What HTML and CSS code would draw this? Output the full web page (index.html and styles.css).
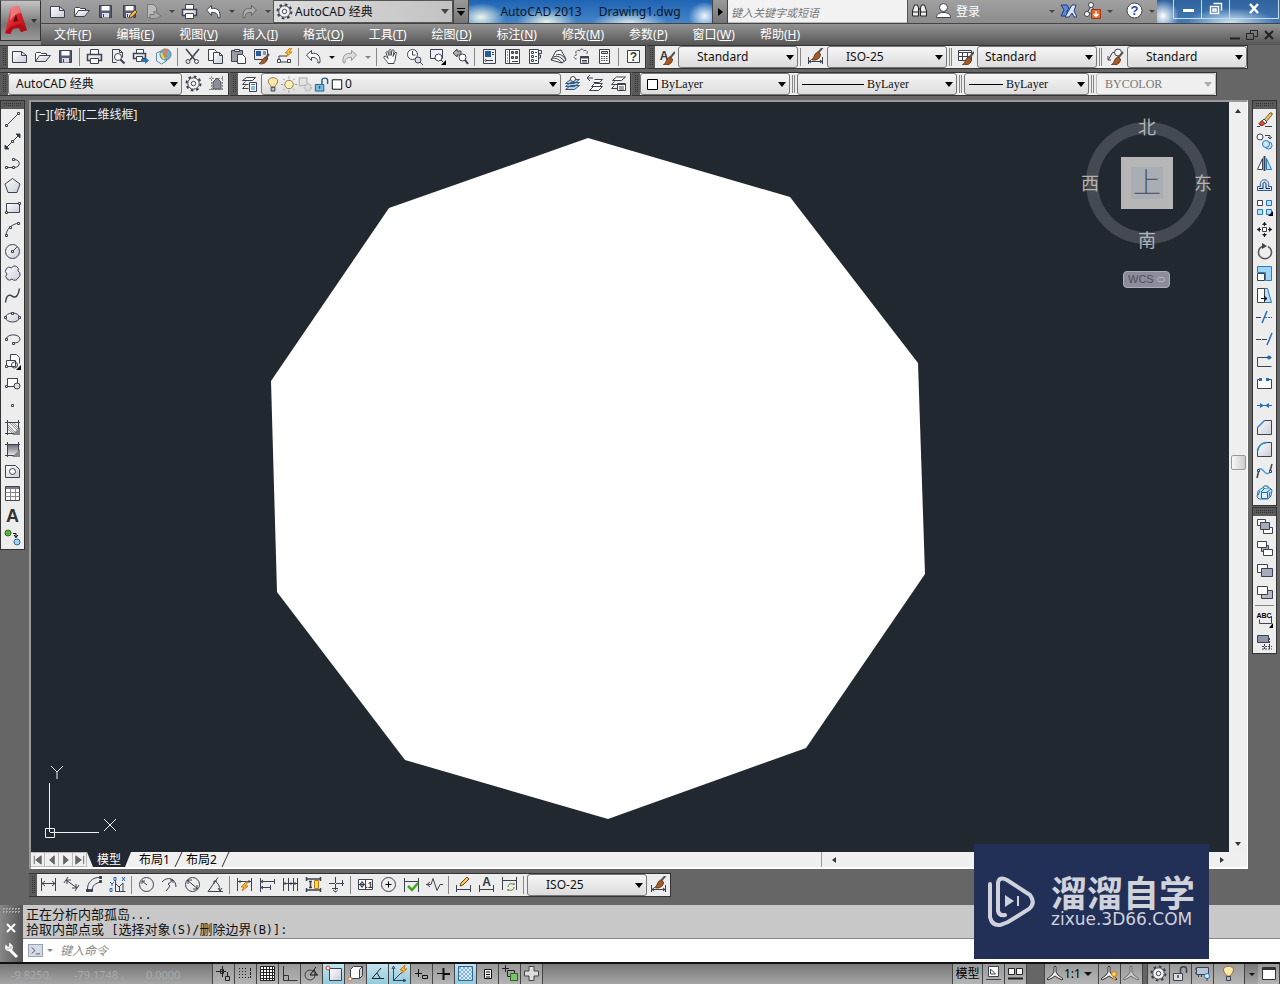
FILE: index.html
```html
<!DOCTYPE html>
<html lang="zh-CN">
<head>
<meta charset="utf-8">
<title>AutoCAD 2013 Drawing1.dwg</title>
<link rel="stylesheet" href="styles.css">
</head>
<body>
<svg class="defs" aria-hidden="true">
<defs>
<linearGradient id="g-sheet" x1="0" y1="0" x2="1" y2="1"><stop offset="0" stop-color="#fff"/><stop offset="1" stop-color="#c9ccd8"/></linearGradient>
<linearGradient id="g-blue" x1="0" y1="0" x2="1" y2="1"><stop offset="0" stop-color="#fff"/><stop offset="1" stop-color="#a5d3f2"/></linearGradient>
<linearGradient id="g-dark" x1="0" y1="0" x2="0" y2="1"><stop offset="0" stop-color="#6c6f76"/><stop offset="1" stop-color="#e4e5e8"/></linearGradient>
<linearGradient id="g-red" x1="0" y1="0" x2="1" y2="1"><stop offset="0" stop-color="#ee6a6d"/><stop offset=".5" stop-color="#d81f28"/><stop offset="1" stop-color="#a00a12"/></linearGradient>
<pattern id="p-check" width="4" height="4" patternUnits="userSpaceOnUse"><path d="M0 0h4v4h-4z" fill="#dcecf8" stroke="none"/><path d="M0 0h2v2h-2zM2 2h2v2h-2z" fill="#7fb0de" stroke="none"/></pattern>
</defs>
<symbol id="new" viewBox="0 0 17 17"><path d="M1.500 3.500h9l5 4v7h-14z" fill="url(#g-sheet)"/><path d="M10.500 3.500v4h5"/></symbol>
<symbol id="open" viewBox="0 0 17 17"><path d="M1.500 13.500v-8l1-1h4l1 1h5v2" fill="#fff"/><path d="M1.500 13.500l4-6h11l-5 6z" fill="url(#g-sheet)"/></symbol>
<symbol id="save" viewBox="0 0 17 17"><path d="M2.500 2.500h12v12h-12z" fill="#565c70"/><path d="M4.500 3h8v4.500h-8z" fill="#fff" stroke="none"/><path d="M5 10h7v4.500h-7z" fill="#dde" stroke="none"/><path d="M6.500 11v3"/></symbol>
<symbol id="saveas" viewBox="0 0 17 17"><use href="#save"/><path d="M8 15l1-3 5-5 2 2-5 5z" fill="#f3b84b" stroke="#754a15"/></symbol>
<symbol id="export" viewBox="0 0 17 17"><path d="M2.500 1.500h6l3 3v10h-9z" fill="#bbb" stroke="#777"/><path d="M9 8l7 5-5 2.500h-6v-4h4z" fill="#aaa" stroke="#777"/></symbol>
<symbol id="print" viewBox="0 0 17 17"><path d="M4.500 6v-4.500h8v4.500" fill="#fff"/><path d="M1.500 6.500h14v6h-14z" fill="url(#g-sheet)" stroke-width="1.500"/><path d="M4.500 10.500h8v5h-8z" fill="#fff"/></symbol>
<symbol id="preview" viewBox="0 0 17 17"><path d="M3.500 14.500v-13h7l3 3v5M3.500 14.500h4M10.500 1.500v3h3" /><circle cx="9" cy="9" r="3.500" fill="#fff"/><path d="M11.500 11.500l4 4" stroke-width="2"/></symbol>
<symbol id="publish" viewBox="0 0 17 17"><path d="M4.500 5v-3.500h7v3.500" fill="#fff"/><path d="M1.500 5.500h12v5h-12z" fill="url(#g-sheet)" stroke-width="1.500"/><path d="M4.500 8.500h6v5h-6z" fill="#fff"/><path d="M9 11h4v-2l4 3.500-4 3.500v-2h-4z" fill="#2474bd" stroke="none"/></symbol>
<symbol id="globe" viewBox="0 0 17 17"><path d="M1.500 5l5-2 5 2v8l-5 3-5-3z" fill="#dff1fb" stroke="#5e88a2"/><circle cx="10.500" cy="6.500" r="5.500" fill="#59b7d8" stroke="#777"/><path d="M8 2c4-1 5 2 2 3s0 4 3 3" stroke="#ee7841" stroke-width="2"/><path d="M6 5l3 6" stroke="#edda50" stroke-width="2"/></symbol>
<symbol id="cut" viewBox="0 0 17 17"><path d="M2 1l9 11M15 1l-9 11" stroke-width="1.500"/><circle cx="4" cy="13.500" r="2"/><circle cx="12.500" cy="13.500" r="2"/></symbol>
<symbol id="copy" viewBox="0 0 17 17"><path d="M1.500 1.500h6l2 2v9h-8z" fill="#fff"/><path d="M6.500 4.500h6l3 3v8h-9z" fill="url(#g-sheet)"/><path d="M12.500 4.500v3h3"/></symbol>
<symbol id="paste" viewBox="0 0 17 17"><path d="M1.500 2.500h11v11h-11z" fill="#9a9ca5"/><path d="M4.500 1.500h5v2h-5z" fill="#eee"/><path d="M7.500 6.500h5l3 3v6h-8z" fill="#fff"/></symbol>
<symbol id="match" viewBox="0 0 17 17"><path d="M1.500 1.500h13v10h-13z" fill="#e7e8ee"/><path d="M3 3h5v5h-5z" fill="#28599b" stroke="none"/><path d="M10 4h3M10 6h3"/><path d="M16 6l-5 6" stroke="#555" stroke-width="2"/><path d="M12 9.500l2 2c-1 4-5 5-8 4 3-1 2-4 6-6z" fill="#a55b28" stroke="#6b3717"/></symbol>
<symbol id="block" viewBox="0 0 17 17"><path d="M3 12v-4h8M5 14h7"/><path d="M1.500 11.500h3v3h-3zM11.500 11.500h3v3h-3z" fill="#fff"/><path d="M14 0l-5 5h3l-2 4 6-5h-3l3-4z" fill="#fac43c" stroke="#d08413"/></symbol>
<symbol id="undo" viewBox="0 0 17 17"><path d="M1.500 7l5-4.500v3c6-1 9 2 8.500 9l-2 .500c0-4-2-6-6.500-5.500v3z" fill="#fff"/></symbol>
<symbol id="redo" viewBox="0 0 17 17"><path d="M15.500 7l-5-4.500v3c-6-1-9 2-8.500 9l2 .500c0-4 2-6 6.500-5.500v3z" fill="#ddd" stroke="#999"/></symbol>
<symbol id="redo-dim" viewBox="0 0 17 17"><path d="M15.500 7l-5-4.500v3c-6-1-9 2-8.500 9l2 .500c0-4 2-6 6.500-5.500v3z" fill="#aaa" stroke="#666"/></symbol>
<symbol id="pan" viewBox="0 0 17 17"><path d="M5 15.500c-1-3-5-5-4-7 2-1 3 1 4 2l-2-6c1-2 2-1 3 3l0-5c1-2 2-1 2 0v5l1-5c1-1 2-1 2 1l-1 5 2-4c2-1 2 1 1 2l-1 6c-1 1-1 2-1 3z" fill="#fff"/></symbol>
<symbol id="zoomrt" viewBox="0 0 17 17"><circle cx="6.500" cy="6.500" r="5" fill="#fff"/><path d="M6.500 3v4h3M14 14l3 3"/><circle cx="12" cy="12" r="3" fill="#dde"/></symbol>
<symbol id="zoomwin" viewBox="0 0 17 17"><path d="M1.500 1.500h12v9h-12z" fill="#eef"/><circle cx="9.500" cy="9.500" r="3.500" fill="#fff"/><path d="M12 12l2 2"/><path d="M17 12v5h-5z" fill="#000" stroke="none"/></symbol>
<symbol id="zoomprev" viewBox="0 0 17 17"><path d="M1 5l4-4v2h4v4h-4v2z" fill="#aaa"/><circle cx="10.500" cy="9.500" r="3.500" fill="#fff"/><path d="M13 12l3 4" stroke-width="2"/></symbol>
<symbol id="props" viewBox="0 0 17 17"><path d="M2.500 1.500h12v14h-12z" fill="#f0f2f7"/><path d="M4 3h6v6h-6z" fill="#28599b" stroke="none"/><path d="M11 4.500h2M11 6.500h2M5 12.500h7M5 11l-1 1.500 1 1.500"/></symbol>
<symbol id="dcenter" viewBox="0 0 17 17"><path d="M1.500 1.500h14v14h-14z" fill="#fff"/><path d="M5.500 2v13M3 4h1M3 7h1M3 10h1M3 13h1M8 13.500h6" /><path d="M7.500 3.500h2v2h-2zM11.500 3.500h2v2h-2zM7.500 8.500h2v2h-2zM11.500 8.500h2v2h-2z" fill="#778"/></symbol>
<symbol id="palette" viewBox="0 0 17 17"><path d="M2.500 1.500h9v14h-9z" fill="#fff"/><path d="M11.500 2.500h3v3h-3M11.500 7h2v3h-2M4.500 3.500h2v2h-2zM8 4.500h2M4.500 7.500h2v2h-2zM8 8.500h2M4.500 11.500h2v2h-2zM8 12.500h2"/></symbol>
<symbol id="sheets" viewBox="0 0 17 17"><path d="M1 12l5-9 5-1 5 9-4 4z" fill="#fff"/><path d="M1 12c3-3 7-2 11 3l4-3c-2-4-6-7-10-5M2 10c4-3 8-2 12 3" fill="url(#g-sheet)"/></symbol>
<symbol id="markup" viewBox="0 0 17 17"><path d="M3.500 11c-4-1-2-4 0-4-2-4 1-6 3-4 1-3 4-2 4 0 3-2 5 1 3 3" stroke-dasharray="3 1"/><path d="M7.500 8.500h8v7h-8z" fill="#fff"/><path d="M7 9.500h9" stroke-width="2"/><path d="M9 12.500h5M9 14h5"/></symbol>
<symbol id="calc" viewBox="0 0 17 17"><path d="M3.500 1.500h10v14h-10z" fill="#fff"/><path d="M5.500 3.500h6v2h-6z" fill="#ccd"/><path d="M5 8.500h7M5 10.500h7M5 12.500h7" stroke-dasharray="1.500 1"/></symbol>
<symbol id="brush" viewBox="0 0 17 17"><path d="M16 2l-5 6" stroke="#555" stroke-width="2"/><path d="M10.500 7l3 2c0 5-5 7-9 5.500 3-1 2-5 6-7.500z" fill="#a55b28" stroke="#6b3717"/></symbol>
<symbol id="dimstyle" viewBox="0 0 17 17"><use href="#brush" y="-3"/><path d="M1.500 9v7M15.500 9v7M2 13.500h13M4 12l-2 1.500 2 1.500M13 12l2 1.500-2 1.500"/></symbol>
<symbol id="tablestyle" viewBox="0 0 17 17"><path d="M1.500 2.500h13v10h-13z" fill="#fff"/><path d="M1.500 4.500h13M1.500 8.500h13M5.500 4v8M10.500 4v8"/><use href="#brush" x="1" y="2"/></symbol>
<symbol id="leaderstyle" viewBox="0 0 17 17"><circle cx="11" cy="4.500" r="3.500" fill="#fff"/><path d="M7.500 4.500h-2l-4 7M1 8v4h3"/><use href="#brush" x="0" y="2"/></symbol>
<symbol id="gear" viewBox="0 0 17 17"><circle cx="8.500" cy="8.500" r="7" stroke-width="2" stroke-dasharray="2.700 2.800"/><circle cx="8.500" cy="8.500" r="5.700" fill="#f2f2f5"/><circle cx="8.500" cy="8.500" r="2.200" fill="#fff"/></symbol>
<symbol id="wspace" viewBox="0 0 17 17"><path d="M1 3.500h15M1 14.500h15M3.500 1v15M14.500 1v15" stroke="#888" stroke-dasharray="2 1"/><path d="M5 14v-7l4-4 4 4v7z" fill="#8a8e99" stroke="#555"/></symbol>
<symbol id="layerprop" viewBox="0 0 17 17"><path d="M1.500 5.500l4-3h9l-3 3zM1.500 9.500l3-3M1.500 13.500l3-3M1.500 9.500h6M1.500 13.500h6" fill="#fff"/><path d="M8.500 7.500h7v9h-7z" fill="#fff"/><path d="M10 9.500h4M10 12h4M10 14h4" stroke="#277abb"/></symbol>
<symbol id="bulb" viewBox="0 0 17 17"><path d="M6.500 11c0-2-3-3-3-6 0-5 10-5 10 0 0 3-3 4-3 6z" fill="#ffe9a8" stroke="#8a7240"/><path d="M6.500 11.500h4v4h-4z" fill="#bbb"/></symbol>
<symbol id="sun" viewBox="0 0 17 17"><path d="M8.500 0v17M0 8.500h17M2.500 2.500l12 12M14.500 2.500l-12 12" stroke="#888" stroke-dasharray="2 13"/><circle cx="8.500" cy="8.500" r="4.500" fill="#fff0b8" stroke="#85754a"/></symbol>
<symbol id="freeze" viewBox="0 0 17 17"><path d="M2.500 1.500h8v8h-8z" fill="#e5e5e5" stroke="#bbb" stroke-width="1.500"/><circle cx="11.500" cy="11.500" r="3.500" fill="#ddd" stroke="#bbb" stroke-width="2" stroke-dasharray="2 1"/></symbol>
<symbol id="unlock" viewBox="0 0 17 17"><path d="M2.500 8.500h9v7h-9z" fill="#79bfe5" stroke="#245d85"/><path d="M9.500 8v-4c0-3 6-3 6 0v4M7 10v3" stroke="#245d85" stroke-width="1.500"/></symbol>
<symbol id="swatch" viewBox="0 0 17 17"><path d="M3.500 3.500h10v10h-10z" fill="#fff" stroke="#000"/></symbol>
<symbol id="layers" viewBox="0 0 17 17"><path d="M1.500 14.500h9l5-4h-9zM1.500 11.500h9l5-4h-9zM1.500 8.500h9l5-4h-9z" fill="#a9d4f1" stroke="#3c5876"/><circle cx="9" cy="4" r="2.500" fill="#fff"/></symbol>
<symbol id="layerprev" viewBox="0 0 17 17"><path d="M2.500 15.500h9l4-4h-9zM4.500 11.500h8l3-3h-8zM6.500 7.500h6l3-3h-8" fill="#fff"/><path d="M0 3h6M3 0l-3 3 3 3"/></symbol>
<symbol id="layerstate" viewBox="0 0 17 17"><path d="M2.500 5.500l4-3.500h9l-4 3.500zM1.500 9.500l3-3M1.500 13.500l3-3M1.500 9.500h6M1.500 13.500h6" fill="#fff"/><path d="M7.500 8.500h8v7h-8z" fill="#fff"/><path d="M7 9.500h9M9 12h5M9 14h5"/></symbol>
<symbol id="line" viewBox="0 0 17 17"><path d="M2 15L15 2"/><path d="M1.500 13.500h2v2h-2zM13.500 1.500h2v2h-2z" fill="#fff"/></symbol>
<symbol id="xline" viewBox="0 0 17 17"><path d="M2 15L15 2"/><path d="M1 16v-4l4 4zM16 1v4l-4-4z" fill="#333"/><path d="M7.500 7.500h2v2h-2z" fill="#fff"/></symbol>
<symbol id="pline" viewBox="0 0 17 17"><path d="M2 12.500h8c7 0 7-8 0-8"/><path d="M1.500 11.500h2v2h-2zM8.500 11.500h2v2h-2zM8.500 3.500h2v2h-2z" fill="#fff"/></symbol>
<symbol id="polygon" viewBox="0 0 17 17"><path d="M8.500 1.500l7.500 5.500-3 8.500h-9l-3-8.500z" fill="url(#g-sheet)"/></symbol>
<symbol id="rect" viewBox="0 0 17 17"><path d="M2.500 4.500h13v9h-13z" fill="url(#g-sheet)"/><path d="M1.500 12.500h2v2h-2zM14.500 3.500h2v2h-2z" fill="#fff"/></symbol>
<symbol id="arc" viewBox="0 0 17 17"><path d="M2 15c0-7 6-12 13-13"/><path d="M1.500 13.500h2v2h-2zM5.500 5.500h2v2h-2zM13.500 1.500h2v2h-2z" fill="#fff"/></symbol>
<symbol id="circle" viewBox="0 0 17 17"><circle cx="8.500" cy="8.500" r="7" fill="url(#g-sheet)"/><path d="M8 9l5-5"/><path d="M7.500 7.500h2v2h-2z" fill="#fff"/></symbol>
<symbol id="cloud" viewBox="0 0 17 17"><path d="M7.500 3a3.500 3.500 0 0 1 6.500 3 4 4 0 0 1 0 7 3.500 3.500 0 0 1-6 1 3.500 3.500 0 0 1-5-5 3.500 3.500 0 1 1 4.500-6z" fill="url(#g-sheet)"/></symbol>
<symbol id="spline" viewBox="0 0 17 17"><path d="M1.500 15.500c1-10 6-7 7-6 4 2 6-2 7-8" stroke-width="1.500"/></symbol>
<symbol id="ellipse" viewBox="0 0 17 17"><ellipse cx="8.500" cy="8.500" rx="7" ry="4.500" fill="url(#g-sheet)"/><path d="M.500 7.500h2v2h-2zM14.500 7.500h2v2h-2zM7.500 3.500h2v2h-2z" fill="#fff"/></symbol>
<symbol id="earc" viewBox="0 0 17 17"><path d="M2 8c2-6 14-5 14 0 0 3-3 4-7 4"/><path d="M1.500 7.500h2v2h-2zM8.500 11.500h2v2h-2z" fill="#fff"/></symbol>
<symbol id="insert" viewBox="0 0 17 17"><path d="M6.500 7v-5.500h6l3 3v6" fill="#fff"/><path d="M2.500 7.500h9v6h-9z" fill="#fff"/><circle cx="10.500" cy="12" r="3"/><path d="M1.500 12.500h2v2h-2z" fill="#fff"/><path d="M17 12v5h-5z" fill="#000" stroke="none"/></symbol>
<symbol id="mkblock" viewBox="0 0 17 17"><path d="M3.500 3.500h10v8h-10z" fill="#fff"/><circle cx="13" cy="11" r="3" fill="#ddd"/><path d="M1.500 10.500h2v2h-2z" fill="#fff"/></symbol>
<symbol id="point" viewBox="0 0 17 17"><path d="M7.500 7.500h2v2h-2z" fill="#fff"/></symbol>
<symbol id="hatch" viewBox="0 0 17 17"><path d="M4 10l4 4M4 6l8 8M6 4l8 8M10 4l4 4M4 8l6 6M8 4l6 6" stroke="#777" stroke-width=".7"/><path d="M1 3.500h15M1 14.500h15M3.500 1v15M14.500 1v15"/><path d="M8 16l8-8v8z" fill="#888" stroke="none"/></symbol>
<symbol id="gradient" viewBox="0 0 17 17"><path d="M4 4h10v10h-10z" fill="url(#g-dark)" stroke="none"/><path d="M1 3.500h15M1 14.500h15M3.500 1v15M14.500 1v15"/><path d="M8 16l8-8v8z" fill="#888" stroke="none"/></symbol>
<symbol id="region" viewBox="0 0 17 17"><path d="M1.500 2.500h10l4 4v8h-14z" fill="url(#g-sheet)"/><circle cx="8.500" cy="8.500" r="3" fill="#fff"/></symbol>
<symbol id="table" viewBox="0 0 17 17"><path d="M1.500 1.500h14v14h-14z" fill="#fff"/><path d="M2 3h13" stroke="#777c88" stroke-width="2"/><path d="M1.500 7.500h14M1.500 11.500h14M6.500 4v11M11.500 4v11" stroke="#888"/></symbol>
<symbol id="addsel" viewBox="0 0 17 17"><circle cx="4" cy="4" r="3" fill="#5eae43" stroke="#2c6a20"/><circle cx="13" cy="13" r="3" fill="#9ed4f5" stroke="#286b9b"/><path d="M9 4.500h3v4M10 6l2 2.500 2-2.500" stroke="#000"/></symbol>
<symbol id="erase" viewBox="0 0 17 17"><path d="M8 9l6-7 2 0 0 2-6 7z" fill="#eec36c" stroke="#7b5720"/><path d="M8 8l3 3-2 2-3-3z" fill="#fff"/><path d="M6 9.500l3 3-2 2q-3 1-4-2z" fill="#d74b3b" stroke="#7a2721"/><path d="M1 15.500h3M9 15.500h7"/></symbol>
<symbol id="copyobj" viewBox="0 0 17 17"><circle cx="4" cy="4" r="3" fill="#fff"/><path d="M9 2.500h5v3M12 4l2 2 2-2"/><circle cx="12.500" cy="12.500" r="3.500" fill="#cde8fa" stroke="#287abf"/><circle cx="10" cy="11" r="3.500" fill="#cde8fa" stroke="#287abf"/></symbol>
<symbol id="mirror" viewBox="0 0 17 17"><path d="M1.500 14.500l5-11v11z" fill="#fff"/><path d="M8.500 1v15" stroke-width="2"/><path d="M10.500 3.500l5 11h-5z" fill="#b9def7" stroke="#287abf"/></symbol>
<symbol id="offset" viewBox="0 0 17 17"><path d="M1.500 13.500h14v-4h-3c2-9-10-9-8 0h-3z" fill="#cde8fa" stroke="#28599b"/><path d="M3 11.500h4v-4c0-3 3-3 3 0v4h4" stroke="#222"/></symbol>
<symbol id="array" viewBox="0 0 17 17"><path d="M1.500 1.500h5v5h-5z" fill="#fff"/><path d="M10.500 1.500h5v5h-5zM1.500 10.500h5v5h-5zM10.500 10.500h5v5h-5z" fill="#b9def7" stroke="#287abf"/><path d="M17 12v5h-5z" fill="#000" stroke="none"/></symbol>
<symbol id="move" viewBox="0 0 17 17"><path d="M6.500 6.500h4v4h-4z" fill="#fff"/><path d="M8.500 1v4M8.500 12v4M1 8.500h4M12 8.500h4" stroke="#222"/><path d="M6 4l2.500-3 2.500 3zM6 13l2.500 3 2.500-3zM4 6l-3 2.500 3 2.500zM13 6l3 2.500-3 2.500z" fill="#222" stroke="none"/></symbol>
<symbol id="rotate" viewBox="0 0 17 17"><path d="M12 3.500a6.500 6.500 0 1 1-6 0" stroke="#555" stroke-width="1.500"/><path d="M6 0l5 3-5 3z" fill="#444" stroke="none"/></symbol>
<symbol id="scale" viewBox="0 0 17 17"><path d="M1.500 1.500h14v14h-6v-8h-8z" fill="#9ed4f5" stroke="#287abf"/><path d="M1.500 8.500h7v7h-7z" fill="#fff"/></symbol>
<symbol id="stretch" viewBox="0 0 17 17"><path d="M8.500 1.500h3l4 14h-7z" fill="#b9def7" stroke="#287abf"/><path d="M1.500 1.500h7v14h-7z" fill="#fff"/><path d="M5 11.500h6M8 9l3 2.500-3 2.500" stroke="#000"/></symbol>
<symbol id="trim" viewBox="0 0 17 17"><path d="M0 8.500h5"/><path d="M6 14l5-12" stroke="#246bb9" stroke-width="1.500"/><path d="M9 8.500h7" stroke="#246bb9" stroke-dasharray="2 1"/></symbol>
<symbol id="extend" viewBox="0 0 17 17"><path d="M0 8.500h5M6 8.500h5" stroke-dasharray="5 1 2 1"/><path d="M11 14l5-12" stroke="#3465ca" stroke-width="1.500"/></symbol>
<symbol id="breakpt" viewBox="0 0 17 17"><path d="M15.500 13.500h-14v-9h14"/><circle cx="13" cy="4.500" r="2" fill="#246bb9" stroke="none"/></symbol>
<symbol id="break" viewBox="0 0 17 17"><path d="M4 4.500h-2.500v9h14v-9h-2.500" fill="#fff"/><path d="M3 4.500h3M10 4.500h3" stroke="#246bb9" stroke-width="3"/></symbol>
<symbol id="join" viewBox="0 0 17 17"><path d="M1 8.500h15" stroke="#246bb9"/><path d="M4 6l4 2.500-4 2.500zM13 6l-4 2.500 4 2.500z" fill="#246bb9" stroke="none"/></symbol>
<symbol id="chamfer" viewBox="0 0 17 17"><path d="M1.500 8.500l7-7h7v14h-14z" fill="url(#g-sheet)"/><path d="M1.500 8.500l7-7" stroke="#2888d4" stroke-width="1.500"/></symbol>
<symbol id="fillet" viewBox="0 0 17 17"><path d="M1.500 15.500v-5q1-8 9-9h5v14z" fill="url(#g-sheet)"/><path d="M1.500 10.500q1-8 9-9" stroke="#2888d4" stroke-width="1.500"/></symbol>
<symbol id="blend" viewBox="0 0 17 17"><path d="M1 15l2-8M16 1l-2 7" stroke-width="1.500"/><path d="M2 7c5-5 7 8 12 2" stroke="#4da0e4" stroke-width="1.500"/><path d="M1.500 6.500h2v2h-2zM13.500 7.500h2v2h-2z" fill="#fff"/></symbol>
<symbol id="explode" viewBox="0 0 17 17"><path d="M1 12l1-6 4-3h8l2 2-1 6-3 3h-9z" fill="#cde9fb" stroke="#287abf"/><path d="M5.500 7.500h6v6h-6zM5 7l4-4M11 7l4-3M2 10l2-4M13 12l1-5M7 3l1-2h4v2" fill="#dff1fd" stroke="#176dae"/></symbol>
<symbol id="front" viewBox="0 0 17 17"><path d="M1.500 1.500h8v6h-8zM7.500 9.500h9v6h-9z" fill="#fff"/><path d="M4.500 4.500h9v7h-9z" fill="#a5a9b9"/></symbol>
<symbol id="back" viewBox="0 0 17 17"><path d="M5.500 5.500h7v6h-7z" fill="#a5a9b9"/><path d="M1.500 1.500h9v6h-9zM7.500 9.500h9v6h-9z" fill="#fff"/></symbol>
<symbol id="above" viewBox="0 0 17 17"><path d="M1.500 2.500h10v8h-10z" fill="#fff"/><path d="M5.500 6.500h11v8h-11z" fill="#a8abba"/></symbol>
<symbol id="under" viewBox="0 0 17 17"><path d="M5.500 6.500h11v8h-11z" fill="#b5b7c1"/><path d="M1.500 2.500h10v8h-10z" fill="#fff"/></symbol>
<symbol id="hatchback" viewBox="0 0 17 17"><path d="M1.500 2.500h11v7h-11z" fill="#8d95a7"/><path d="M6 13.500h10M6 16h10M8.500 11v6M13.500 5v12" stroke-dasharray="2 1"/></symbol>
<symbol id="d-lin" viewBox="0 0 17 17"><path d="M1.500 2v13M15.500 2v13M2 7.500h13M5 5l-3 2.500 3 2.500M12 5l3 2.500-3 2.500"/></symbol>
<symbol id="d-align" viewBox="0 0 17 17"><path d="M5 1L1 7M16 9l-4 6M3 4l11 8M4 8v-4h4M13 8v4h-4"/></symbol>
<symbol id="d-arc" viewBox="0 0 17 17"><path d="M1.500 14C1 6 7 1 14 1.500M6 15c0-5 3-8 9-9"/><path d="M.500 13.500h3v2h-3zM4.500 13.500h2v2h-2zM13.500.500h2v2h-2zM13.500 4.500h2v2h-2z" fill="#333"/></symbol>
<symbol id="d-ord" viewBox="0 0 17 17"><path d="M6.500 5v10.500h10M7 8l3 3 4-4v8M10.500 11v4"/><path d="M5 1.500h2v3h-2zM1 12.500h2v3h-2zM1 6l2 2 2-2M3 8v2M13 1l3 4M16 1l-3 4" stroke="#246bb9"/></symbol>
<symbol id="d-rad" viewBox="0 0 17 17"><circle cx="8.500" cy="8.500" r="7"/><path d="M9 9L4 5M4 8v-3h3"/></symbol>
<symbol id="d-jog" viewBox="0 0 17 17"><path d="M1 6c5-6 14-4 14 5M5 15l4-5-2-2 5-4M9 4h3v3"/></symbol>
<symbol id="d-dia" viewBox="0 0 17 17"><circle cx="8.500" cy="8.500" r="7"/><path d="M3 4l11 9M4 8v-4h4M13 9v4h-4"/></symbol>
<symbol id="d-ang" viewBox="0 0 17 17"><path d="M16 15.500h-15l10-14M8 5c3 2 5 5 5 10M7 8v-3h3M11 12l2 3 2-3"/></symbol>
<symbol id="d-quick" viewBox="0 0 17 17"><path d="M1.500 2v13M15.500 2v13M2 5.500h13M4 4v3M13 4v3"/><path d="M10 6l-5 5h3l-2 4 6-5h-3l3-4z" fill="#ffc340" stroke="#c87a15"/></symbol>
<symbol id="d-base" viewBox="0 0 17 17"><path d="M1.500 2v14M2 5.500h13M2 11.500h9M15.500 3v5M11.500 9v5M4 4l-2 1.500 2 1.500M4 10l-2 1.500 2 1.500"/></symbol>
<symbol id="d-cont" viewBox="0 0 17 17"><path d="M1.500 2v13M6.500 2v13M11.500 2v13M15.500 2v13M2 7.500h13M3 6v3M9 6v3M13 6v3"/></symbol>
<symbol id="d-space" viewBox="0 0 17 17"><path d="M1 3h15M1 14h15M1.500 1v4M15.500 1v4M1.500 12v4M15.500 12v4M5.500 5v7M4 5.500h3M4 11.500h3" stroke-width="1.500"/><path d="M9.500 4.500h4v8h-4z" fill="#ffd252" stroke="#b67c15"/></symbol>
<symbol id="d-break" viewBox="0 0 17 17"><path d="M1 7.500h15M7.500 1v15M4 12.500h7M14.500 4v7M5 14l2.500 2 2.500-2" stroke-dasharray="6 1"/></symbol>
<symbol id="d-center" viewBox="0 0 17 17"><circle cx="8.500" cy="8.500" r="7"/><path d="M8.500 5.500v6M5.500 8.500h6" stroke="#000"/></symbol>
<symbol id="d-insp" viewBox="0 0 17 17"><path d="M1.500 2v14M15.500 2v14M2 5.500h13"/><path d="M5 10l4 4 6-7" stroke="#42a421" stroke-width="2.500"/></symbol>
<symbol id="d-jogl" viewBox="0 0 17 17"><path d="M0 8.500h5l2-6 4 12 3-6h3M4 6l-3 2.500 3 2.500"/></symbol>
<symbol id="d-edit" viewBox="0 0 17 17"><path d="M1.500 9v7M15.500 9v7M2 13.500h13"/><path d="M5 10l1-3 6-6 2 2-6 6z" fill="#f6c464" stroke="#754a15"/></symbol>
<symbol id="d-upd" viewBox="0 0 17 17"><path d="M1.500 1v13M15.500 1v13M2 4.500h13"/><path d="M7 11c0-4 5-4 6-2v-2M13 11c0 4-5 4-6 2v2" stroke="#4b7a22"/></symbol>
<symbol id="s-infer" viewBox="0 0 17 17"><path d="M1 6.500h10M7.500 1v11M5.500 4.500h3v4h-3zM10.500 11.500h4v4h-4zM12.500 7v4" stroke="#222"/></symbol>
<symbol id="s-snap" viewBox="0 0 17 17"><path d="M2 3.500h9M2 6.500h9M2 9.500h9M2 12.500h12" stroke="#222" stroke-dasharray="1 2"/><path d="M13.500 3v10" stroke="#222" stroke-dasharray="3 1"/></symbol>
<symbol id="s-grid" viewBox="0 0 17 17"><path d="M1.500 1.500h14v14h-14z" fill="#fff" stroke="#222"/><path d="M4.500 1v15M7.500 1v15M10.500 1v15M13.500 1v15M1 4.500h15M1 7.500h15M1 10.500h15M1 13.500h15" stroke="#222"/></symbol>
<symbol id="s-ortho" viewBox="0 0 17 17"><path d="M2.500 1v14.500h14M2.500 10.500h5v5" stroke="#333"/></symbol>
<symbol id="s-polar" viewBox="0 0 17 17"><circle cx="7" cy="10" r="5"/><path d="M7 10l6-8M7 10h8M11 5l3 5" stroke="#111"/></symbol>
<symbol id="s-osnap" viewBox="0 0 17 17"><path d="M4.500 3.500h12v12h-12z" fill="url(#g-sheet)"/><circle cx="3" cy="3" r="2" stroke="#d33b2a" fill="#fff"/></symbol>
<symbol id="s-osnap3" viewBox="0 0 17 17"><path d="M3.500 4.500l3-3h9v9l-3 3h-9z" fill="#fff"/><path d="M12.500 4.500v9l3-3v-9z" fill="#ccc"/><circle cx="3" cy="14" r="2" stroke="#d46b2a" fill="#fff"/></symbol>
<symbol id="s-track" viewBox="0 0 17 17"><path d="M12 3l-9 10.500h12M8 8l3 5" stroke="#222"/></symbol>
<symbol id="s-ducs" viewBox="0 0 17 17"><path d="M2.500 15v-12M2 15.500h12M3 15l8-8M1 4l1.500-3 1.500 3M12 14l3 1.500-3 1.500"/><path d="M14 0l-5 5h3l-2 4 6-5h-3z" fill="#ffc340" stroke="#c87a15"/></symbol>
<symbol id="s-dyn" viewBox="0 0 17 17"><path d="M2 8.500h7M5.500 4v8M9.500 10.500h5v3h-5z" stroke="#111"/></symbol>
<symbol id="s-lw" viewBox="0 0 17 17"><path d="M2 8.500h6" stroke="#111"/><path d="M8 9h7M8.500 3v12" stroke="#111" stroke-width="2"/></symbol>
<symbol id="s-tpy" viewBox="0 0 17 17"><path d="M1.500 1.500h14v14h-14z" fill="url(#p-check)" stroke="#34679b"/></symbol>
<symbol id="s-qp" viewBox="0 0 17 17"><path d="M5.500 4.500h7v9h-7z" fill="#eee" stroke="#111"/><path d="M7 7h4M7 9.500h4M7 12h4" stroke="#111"/></symbol>
<symbol id="s-sc" viewBox="0 0 17 17"><path d="M1 3.500h7M4.500 0v7M6.500 5.500h7v6h-7z" stroke="#222"/><path d="M9.500 8.500h7v7h-7z" fill="#7cc46d" stroke="#286322"/></symbol>
<symbol id="s-plus" viewBox="0 0 17 17"><path d="M6 1.500h5v4.500h4.500v5h-4.500v4.500h-5v-4.500h-4.500v-5h4.500z" fill="#ddd" stroke="#444"/></symbol>
<symbol id="s-layout" viewBox="0 0 17 17"><path d="M3.500 1.500h10v10h-10z" fill="#fff"/><path d="M5.500 4v5h5zM1 14.500h15" /></symbol>
<symbol id="s-views" viewBox="0 0 17 17"><path d="M1.500 3.500h6v6h-6zM9.500 3.500h6v6h-6z" fill="#fff" stroke="#222"/><path d="M1 13.500h15" stroke="#222" stroke-width="2"/></symbol>
<symbol id="s-anno" viewBox="0 0 17 17"><path d="M8 1l1 1v5l2 3 5 4-1 1-4-2-3-2-3 2-4 2-1-1 5-4 2-3v-5z" fill="#eee" stroke="#333"/></symbol>
<symbol id="s-annov" viewBox="0 0 17 17"><use href="#s-anno"/><circle cx="13" cy="9" r="2.500" fill="#ffd258" stroke="#c87a15"/><path d="M13 12v4" stroke="#df9c30" stroke-width="2"/></symbol>
<symbol id="s-hw" viewBox="0 0 17 17"><path d="M2.500 2.500h12v7h-12z" fill="#b5c6d8"/><path d="M4.500 10v2M7.500 10v2M1 4h2M1 8h2"/><circle cx="13" cy="11" r="2.500" fill="#d8efff" stroke="#287abf"/><path d="M13 13v3"/></symbol>
<symbol id="s-lock" viewBox="0 0 17 17"><path d="M1.500 8.500h9v7h-9z" fill="#ddd"/><path d="M8.500 8v-4c0-3 6-3 6 0v4M6 10v3" stroke-width="1.500"/></symbol>
<symbol id="s-clean" viewBox="0 0 17 17"><path d="M2.500 2.500h13v12h-13z" fill="#fff" stroke="#333"/><path d="M3 4h12" stroke="#333" stroke-width="2"/></symbol>
<symbol id="binoc" viewBox="0 0 17 17"><path d="M1.500 14v-5l2-6h3l1 3v8zM9.500 14v-8l1-3h3l2 6v5z" fill="#eee" stroke="#222"/><path d="M7 7h3M2 10h5M10 10h5" stroke="#222"/></symbol>
<symbol id="user" viewBox="0 0 17 17"><circle cx="8.500" cy="5.500" r="4" fill="#fff"/><path d="M1.500 15.500c0-4 3-4 5-5h4c2 1 5 1 5 5z" fill="#fff"/></symbol>
<symbol id="exchange" viewBox="0 0 17 17"><path d="M1 3h6l2 3-2 3v5h-6l3-6z" fill="#5c8ad8" stroke="#203a80"/><path d="M16 3h-4l-7 12h4l3-4 2 4h3l-3-6z" fill="#dce6fa" stroke="#203a80"/></symbol>
<symbol id="share" viewBox="0 0 17 17"><path d="M3 11l4-7 6 7z" fill="#ccd"/><circle cx="7" cy="3" r="2.500" fill="#fff"/><circle cx="3" cy="12" r="2.500" fill="#fff"/><path d="M7.500 7.500h9v9h-9z" fill="#e8692d" stroke="#9b3a12"/><path d="M12 9v5M9.500 12l2.500 2.500 2.500-2.500" stroke="#fff" stroke-width="1.500"/></symbol>
</svg>

<header class="top">
<button class="appbtn" aria-label="应用程序菜单"><svg viewBox="0 0 39 39"><path d="M4 32L10 6l8-1 8 24-6 2-2-5-6 1-3 6z" fill="url(#g-red)"/><path d="M12 21l3-8 2 7z" fill="#6d090e"/><path d="M10 6l8-1 2 7c-4 0-8 3-11 8z" fill="#f4a3a5" opacity=".6"/><path d="M4 32l5-6 10-3 7 6-6 2-2-4-6 1-3 5z" fill="#b30d17"/><path d="M30 18h6l-3 4z" fill="#333"/></svg></button>
<div class="titlebar">
<div class="qat">
<button class="b" aria-label="新建"><svg><use href="#new"/></svg></button><button class="b" aria-label="打开"><svg><use href="#open"/></svg></button><button class="b" aria-label="保存"><svg><use href="#save"/></svg></button><button class="b" aria-label="另存为"><svg><use href="#saveas"/></svg></button><button class="b" aria-label="导出"><svg><use href="#export"/></svg></button><button class="drop dim" aria-label="更多"></button><button class="b" aria-label="打印"><svg><use href="#print"/></svg></button><button class="b" aria-label="放弃"><svg><use href="#undo"/></svg></button><button class="drop dim" aria-label="放弃列表"></button><button class="b" aria-label="重做"><svg><use href="#redo-dim"/></svg></button><button class="drop dim" aria-label="重做列表"></button>
</div>
<label class="combo wsp"><svg><use href="#gear"/></svg><select aria-label="工作空间切换"><option>AutoCAD 经典</option></select></label>
<button class="cell more" aria-label="自定义快速访问工具栏"></button>
<div class="caption"><span>AutoCAD 2013</span><span>Drawing1.dwg</span></div>
<button class="cell side" aria-label="展开搜索"></button>
<input class="search" type="text" placeholder="键入关键字或短语" aria-label="搜索">
<div class="info">
<button class="b" aria-label="搜索"><svg><use href="#binoc"/></svg></button><button class="b" aria-label="用户"><svg><use href="#user"/></svg></button><button class="login">登录</button><button class="drop dim push" aria-label="登录选项"></button><button class="b" aria-label="Exchange"><svg><use href="#exchange"/></svg></button><button class="b" aria-label="连接"><svg><use href="#share"/></svg></button><button class="drop dim" aria-label="连接选项"></button><button class="b q" aria-label="帮助"><svg viewBox="0 0 17 17"><circle cx="8.500" cy="8.500" r="7.500" fill="#fff"/><text x="8.500" y="13" class="glyph help">?</text></svg></button><button class="drop dim" aria-label="帮助选项"></button>
</div>
<div class="winbtns"><button aria-label="最小化"><svg viewBox="0 0 26 18"><path d="M8 10.500h11" stroke="#fff" stroke-width="3"/></svg></button><button aria-label="还原"><svg viewBox="0 0 26 18"><path d="M10.500 3.500h8v7M7.500 6.500h8v7h-8zM10 9h3v2h-3z" stroke="#fff" fill="none" stroke-width="1.500"/></svg></button><button class="close" aria-label="关闭"><svg viewBox="0 0 26 18"><path d="M9 4l8 9M17 4l-8 9" stroke="#fff" stroke-width="2.500"/></svg></button></div>
</div>
<nav class="menubar">
<a href="#">文件(<u>F</u>)</a><a href="#">编辑(<u>E</u>)</a><a href="#">视图(<u>V</u>)</a><a href="#">插入(<u>I</u>)</a><a href="#">格式(<u>O</u>)</a><a href="#">工具(<u>T</u>)</a><a href="#">绘图(<u>D</u>)</a><a href="#">标注(<u>N</u>)</a><a href="#">修改(<u>M</u>)</a><a href="#">参数(<u>P</u>)</a><a href="#">窗口(<u>W</u>)</a><a href="#">帮助(<u>H</u>)</a>
<span class="docbtns"><button aria-label="最小化图形"><svg viewBox="0 0 12 12"><path d="M1 9.500h10" stroke-width="2"/></svg></button><button aria-label="还原图形"><svg viewBox="0 0 12 12"><path d="M4.500 4v-2.500h7v6h-3M.500 4.500h7v6h-7z"/></svg></button><button aria-label="关闭图形"><svg viewBox="0 0 12 12"><path d="M2 2l8 8M10 2l-8 8" stroke-width="2"/></svg></button></span>
</nav>
</header>

<div class="dock">
<div class="bars">
<div class="bar"><i class="grip"></i><button class="b" aria-label="新建"><svg><use href="#new"/></svg></button><button class="b" aria-label="打开"><svg><use href="#open"/></svg></button><button class="b" aria-label="保存"><svg><use href="#save"/></svg></button><i class="sep"></i><button class="b" aria-label="打印"><svg><use href="#print"/></svg></button><button class="b" aria-label="打印预览"><svg><use href="#preview"/></svg></button><button class="b" aria-label="发布"><svg><use href="#publish"/></svg></button><button class="b" aria-label="三维DWF"><svg><use href="#globe"/></svg></button><i class="sep"></i><button class="b" aria-label="剪切"><svg><use href="#cut"/></svg></button><button class="b" aria-label="复制"><svg><use href="#copy"/></svg></button><button class="b" aria-label="粘贴"><svg><use href="#paste"/></svg></button><button class="b" aria-label="特性匹配"><svg><use href="#match"/></svg></button><button class="b" aria-label="块编辑器"><svg><use href="#block"/></svg></button><i class="sep"></i><button class="b" aria-label="放弃"><svg><use href="#undo"/></svg></button><button class="drop" aria-label="放弃列表"></button><button class="b" aria-label="重做"><svg><use href="#redo"/></svg></button><button class="drop pale" aria-label="重做列表"></button><i class="sep"></i><button class="b" aria-label="平移"><svg><use href="#pan"/></svg></button><button class="b" aria-label="实时缩放"><svg><use href="#zoomrt"/></svg></button><button class="b" aria-label="窗口缩放"><svg><use href="#zoomwin"/></svg></button><button class="b" aria-label="缩放上一个"><svg><use href="#zoomprev"/></svg></button><i class="sep"></i><button class="b" aria-label="特性"><svg><use href="#props"/></svg></button><button class="b" aria-label="设计中心"><svg><use href="#dcenter"/></svg></button><button class="b" aria-label="工具选项板"><svg><use href="#palette"/></svg></button><button class="b" aria-label="图纸集"><svg><use href="#sheets"/></svg></button><button class="b" aria-label="标记集"><svg><use href="#markup"/></svg></button><button class="b" aria-label="计算器"><svg><use href="#calc"/></svg></button><i class="sep"></i><button class="b" aria-label="帮助"><svg viewBox="0 0 17 17"><path d="M2.500 2.500h12v12h-12z" fill="#fff"/><text x="8.500" y="13" class="glyph">?</text></svg></button></div>
<div class="bar"><i class="grip"></i><button class="b" aria-label="文字样式"><svg viewBox="0 0 17 17"><text x="6" y="12" class="glyph">A</text><use href="#brush" x="1" y="2" width="17" height="17"/></svg></button><label class="combo c120 in"><select aria-label="文字样式"><option>Standard</option></select></label><i class="sep"></i><button class="b" aria-label="标注样式"><svg><use href="#dimstyle"/></svg></button><label class="combo c120 in"><select aria-label="标注样式"><option>ISO-25</option></select></label><i class="sep two"></i><button class="b" aria-label="表格样式"><svg><use href="#tablestyle"/></svg></button><label class="combo c120"><select aria-label="表格样式"><option>Standard</option></select></label><i class="sep two"></i><button class="b" aria-label="多重引线样式"><svg><use href="#leaderstyle"/></svg></button><label class="combo c120 in"><select aria-label="多重引线样式"><option>Standard</option></select></label></div>
</div>
<div class="bars">
<div class="bar"><i class="grip"></i><label class="combo c174"><select aria-label="工作空间"><option>AutoCAD 经典</option></select></label><button class="b" aria-label="工作空间设置"><svg><use href="#gear"/></svg></button><button class="b" aria-label="我的工作空间"><svg><use href="#wspace"/></svg></button></div>
<div class="bar"><i class="grip"></i><button class="b" aria-label="图层特性"><svg><use href="#layerprop"/></svg></button><label class="combo c300"><svg class="n"><use href="#bulb"/></svg><svg class="n"><use href="#sun"/></svg><svg class="n"><use href="#freeze"/></svg><svg class="n"><use href="#unlock"/></svg><svg class="n"><use href="#swatch"/></svg><select aria-label="图层"><option>0</option></select></label><button class="b" aria-label="将对象的图层置为当前"><svg><use href="#layers"/></svg></button><button class="b" aria-label="上一个图层"><svg><use href="#layerprev"/></svg></button><button class="b" aria-label="图层状态"><svg><use href="#layerstate"/></svg></button></div>
<div class="bar serif"><i class="grip"></i><label class="combo c150"><svg><use href="#swatch"/></svg><select aria-label="颜色"><option>ByLayer</option></select></label><i class="sep two"></i><label class="combo c160"><i class="ltype long"></i><select aria-label="线型"><option>ByLayer</option></select></label><i class="sep two"></i><label class="combo c125"><i class="ltype"></i><select aria-label="线宽"><option>ByLayer</option></select></label><i class="sep two"></i><label class="combo c120 off"><select aria-label="打印样式" disabled><option>BYCOLOR</option></select></label></div>
</div>
</div>

<main class="work">
<div class="side-tools"><div class="vbar"><i class="grip"></i><button class="b" aria-label="直线"><svg><use href="#line"/></svg></button><button class="b" aria-label="构造线"><svg><use href="#xline"/></svg></button><button class="b" aria-label="多段线"><svg><use href="#pline"/></svg></button><button class="b" aria-label="多边形"><svg><use href="#polygon"/></svg></button><button class="b" aria-label="矩形"><svg><use href="#rect"/></svg></button><button class="b" aria-label="圆弧"><svg><use href="#arc"/></svg></button><button class="b" aria-label="圆"><svg><use href="#circle"/></svg></button><button class="b" aria-label="修订云线"><svg><use href="#cloud"/></svg></button><button class="b" aria-label="样条曲线"><svg><use href="#spline"/></svg></button><button class="b" aria-label="椭圆"><svg><use href="#ellipse"/></svg></button><button class="b" aria-label="椭圆弧"><svg><use href="#earc"/></svg></button><button class="b" aria-label="插入块"><svg><use href="#insert"/></svg></button><button class="b" aria-label="创建块"><svg><use href="#mkblock"/></svg></button><button class="b" aria-label="点"><svg><use href="#point"/></svg></button><button class="b" aria-label="图案填充"><svg><use href="#hatch"/></svg></button><button class="b" aria-label="渐变色"><svg><use href="#gradient"/></svg></button><button class="b" aria-label="面域"><svg><use href="#region"/></svg></button><button class="b" aria-label="表格"><svg><use href="#table"/></svg></button><button class="b" aria-label="多行文字"><svg viewBox="0 0 17 17"><text x="8.500" y="15" class="glyph big">A</text></svg></button><button class="b" aria-label="添加选定对象"><svg><use href="#addsel"/></svg></button></div></div>
<section class="view">
<div class="canvas">
<svg class="drawing" viewBox="31 102 1198 750" role="img" aria-label="十边形"><path d="M588 138L790 197 918 363 925 574 806 748 608 819 405 760 277 592 271 381 389 208z" fill="#fff"/></svg>
<span class="vplabel">[−][俯视][二维线框]</span>
<svg class="cube" viewBox="0 0 140 180"><circle cx="70" cy="70" r="55" fill="none" stroke="#444952" stroke-width="12"/><path d="M44 44h52v52h-52z" fill="#b6b6b6" stroke="none"/><path d="M54 54h32v32h-32z" fill="#a9adb4" stroke="none"/><text x="70" y="80" class="top-face">上</text><text x="70" y="21">北</text><text x="70" y="134">南</text><text x="13" y="77">西</text><text x="126" y="77">东</text></svg>
<button class="wcs">WCS</button>
<svg class="ucs" viewBox="0 0 90 80"><path d="M10.500 67V18M11 67.500H60M6.500 63.500h9v9h-9z"/><path d="M12 1l6 6 6-6M18 7v7M65 54l12 12M77 54L65 66"/></svg>
</div>
<div class="vscroll"><button class="up" aria-label="向上滚动"></button><i class="thumb"></i><button class="down" aria-label="向下滚动"></button></div>
<div class="tabs">
<div class="nav"><button aria-label="第一个"><svg viewBox="0 0 14 14"><path d="M3.500 3v9M11 3v9l-6-4.500z"/></svg></button><button aria-label="上一个"><svg viewBox="0 0 14 14"><path d="M10 3v9l-5-4.500z"/></svg></button><button aria-label="下一个"><svg viewBox="0 0 14 14"><path d="M5 3v9l5-4.500z"/></svg></button><button aria-label="最后一个"><svg viewBox="0 0 14 14"><path d="M11.500 3v9M3 3v9l6-4.500z"/></svg></button></div>
<button class="tab on">模型</button><button class="tab">布局1</button><button class="tab">布局2</button>
<div class="hscroll"><button class="left" aria-label="向左滚动"></button><button class="right" aria-label="向右滚动"></button></div>
</div>
</section>
<div class="side-tools"><div class="vbar"><i class="grip"></i><button class="b" aria-label="删除"><svg><use href="#erase"/></svg></button><button class="b" aria-label="复制对象"><svg><use href="#copyobj"/></svg></button><button class="b" aria-label="镜像"><svg><use href="#mirror"/></svg></button><button class="b" aria-label="偏移"><svg><use href="#offset"/></svg></button><button class="b" aria-label="阵列"><svg><use href="#array"/></svg></button><button class="b" aria-label="移动"><svg><use href="#move"/></svg></button><button class="b" aria-label="旋转"><svg><use href="#rotate"/></svg></button><button class="b" aria-label="缩放"><svg><use href="#scale"/></svg></button><button class="b" aria-label="拉伸"><svg><use href="#stretch"/></svg></button><button class="b" aria-label="修剪"><svg><use href="#trim"/></svg></button><button class="b" aria-label="延伸"><svg><use href="#extend"/></svg></button><button class="b" aria-label="打断于点"><svg><use href="#breakpt"/></svg></button><button class="b" aria-label="打断"><svg><use href="#break"/></svg></button><button class="b" aria-label="合并"><svg><use href="#join"/></svg></button><button class="b" aria-label="倒角"><svg><use href="#chamfer"/></svg></button><button class="b" aria-label="圆角"><svg><use href="#fillet"/></svg></button><button class="b" aria-label="光顺曲线"><svg><use href="#blend"/></svg></button><button class="b" aria-label="分解"><svg><use href="#explode"/></svg></button></div>
<div class="vbar"><i class="grip"></i><button class="b" aria-label="前置"><svg><use href="#front"/></svg></button><button class="b" aria-label="后置"><svg><use href="#back"/></svg></button><button class="b" aria-label="置于对象之上"><svg><use href="#above"/></svg></button><button class="b" aria-label="置于对象之下"><svg><use href="#under"/></svg></button><i class="hsep"></i><button class="b" aria-label="文字前置"><svg viewBox="0 0 17 17"><text x="8" y="7" class="glyph tiny">ABC</text><path d="M15.500 5v7.500h-12v-4"/><path d="M17 12v5h-4z" fill="#000" stroke="none"/></svg></button><button class="b" aria-label="图案填充后置"><svg><use href="#hatchback"/></svg></button></div></div>
</main>

<div class="dimrow"><div class="bar"><i class="grip"></i><button class="b" aria-label="线性"><svg><use href="#d-lin"/></svg></button><button class="b" aria-label="对齐"><svg><use href="#d-align"/></svg></button><button class="b" aria-label="弧长"><svg><use href="#d-arc"/></svg></button><button class="b" aria-label="坐标"><svg><use href="#d-ord"/></svg></button><i class="sep"></i><button class="b" aria-label="半径"><svg><use href="#d-rad"/></svg></button><button class="b" aria-label="折弯"><svg><use href="#d-jog"/></svg></button><button class="b" aria-label="直径"><svg><use href="#d-dia"/></svg></button><button class="b" aria-label="角度"><svg><use href="#d-ang"/></svg></button><i class="sep"></i><button class="b" aria-label="快速标注"><svg><use href="#d-quick"/></svg></button><button class="b" aria-label="基线"><svg><use href="#d-base"/></svg></button><button class="b" aria-label="连续"><svg><use href="#d-cont"/></svg></button><button class="b" aria-label="等距标注"><svg><use href="#d-space"/></svg></button><button class="b" aria-label="折断标注"><svg><use href="#d-break"/></svg></button><i class="sep"></i><button class="b" aria-label="公差"><svg viewBox="0 0 17 17"><path d="M1.500 3.500h14v10h-14zM8.500 4v9" fill="#fff"/><circle cx="5" cy="8.500" r="2"/><path d="M5 5v7M2 8.500h6"/><text x="12" y="12" class="glyph small">.1</text></svg></button><button class="b" aria-label="圆心标记"><svg><use href="#d-center"/></svg></button><button class="b" aria-label="检验"><svg><use href="#d-insp"/></svg></button><button class="b" aria-label="折弯线性"><svg><use href="#d-jogl"/></svg></button><i class="sep"></i><button class="b" aria-label="编辑标注"><svg><use href="#d-edit"/></svg></button><button class="b" aria-label="编辑标注文字"><svg viewBox="0 0 17 17"><path d="M1.500 9v7M15.500 9v7M2 13.500h13"/><text x="8.500" y="10" class="glyph">A</text></svg></button><button class="b" aria-label="标注更新"><svg><use href="#d-upd"/></svg></button><i class="sep"></i><label class="combo c120 in"><select aria-label="标注样式控制"><option>ISO-25</option></select></label><button class="b" aria-label="标注样式"><svg><use href="#dimstyle"/></svg></button></div></div>

<section class="cmd">
<div class="cmdside"><i class="grip"></i><button aria-label="关闭命令行"><svg viewBox="0 0 17 17"><path d="M4 4l8 8M12 4l-8 8" stroke-width="2"/></svg></button><button aria-label="自定义"><svg viewBox="0 0 17 17"><path d="M6 7l8 8" stroke-width="3"/><path d="M3 4c-1 3 1 5 4 4s3-4 0-6l0 3-2 1z" stroke-width="1.500"/></svg></button></div>
<div class="cmdmain">
<div class="log"><p>正在分析内部孤岛<span>...</span></p><p>拾取内部点或<span> [</span>选择对象<span>(S)/</span>删除边界<span>(B)]:</span></p></div>
<div class="prompt"><button class="term" aria-label="最近使用的命令"><svg viewBox="0 0 15 13"><path d="M3 3l4 3.500-4 3.500M8 10.500h5"/></svg></button><button class="drop grey" aria-label="命令历史"></button><input type="text" placeholder="键入命令" aria-label="命令"></div>
</div>
</section>

<footer class="status">
<div class="coords"><span>-9.8250,</span><span>-79.1748 ,</span><span>0.0000</span></div>
<div class="sgroup"><button class="s" aria-label="推断约束"><svg><use href="#s-infer"/></svg></button><button class="s" aria-label="捕捉"><svg><use href="#s-snap"/></svg></button><button class="s" aria-label="栅格"><svg><use href="#s-grid"/></svg></button><button class="s" aria-label="正交"><svg><use href="#s-ortho"/></svg></button><button class="s" aria-label="极轴"><svg><use href="#s-polar"/></svg></button><button class="s on" aria-label="对象捕捉"><svg><use href="#s-osnap"/></svg></button><button class="s" aria-label="三维对象捕捉"><svg><use href="#s-osnap3"/></svg></button><button class="s on" aria-label="对象追踪"><svg><use href="#s-track"/></svg></button><button class="s on" aria-label="动态UCS"><svg><use href="#s-ducs"/></svg></button><button class="s" aria-label="动态输入"><svg><use href="#s-dyn"/></svg></button><button class="s" aria-label="线宽"><svg><use href="#s-lw"/></svg></button><button class="s on" aria-label="透明度"><svg><use href="#s-tpy"/></svg></button><button class="s" aria-label="快捷特性"><svg><use href="#s-qp"/></svg></button><button class="s" aria-label="选择循环"><svg><use href="#s-sc"/></svg></button><button class="s" aria-label="注释监视器"><svg><use href="#s-plus"/></svg></button></div>
<div class="sgroup end"><button class="s txt">模型</button><button class="s" aria-label="快速查看布局"><svg><use href="#s-layout"/></svg></button><button class="s" aria-label="快速查看图形"><svg><use href="#s-views"/></svg></button><i class="gap wide"></i><button class="s scale"><svg><use href="#s-anno"/></svg>1:1<i class="tri"></i></button><button class="s" aria-label="注释可见性"><svg><use href="#s-annov"/></svg></button><button class="s faded" aria-label="自动缩放"><svg><use href="#s-anno"/></svg></button><i class="gap"></i><button class="s" aria-label="切换工作空间"><svg><use href="#gear"/></svg></button><button class="s" aria-label="锁定"><svg><use href="#s-lock"/></svg></button><button class="s" aria-label="硬件加速"><svg><use href="#s-hw"/></svg></button><button class="s lamp" aria-label="隔离对象"><svg><use href="#bulb"/></svg></button><button class="drop" aria-label="状态栏菜单"></button><button class="s" aria-label="全屏显示"><svg><use href="#s-clean"/></svg></button></div>
</footer>

<aside class="brand"><svg viewBox="0 0 48 52"><path d="M3 8v33q2 9 10 8l8-3 21-13q7-6 1-14L20 4q-8-4-9 3v28q1 5 7 4"/><path d="M18 19v12l9-6z" class="play"/><path d="M31 20v10" class="thin"/></svg><div><strong>溜溜自学</strong><span>zixue.3D66.COM</span></div></aside>
</body>
</html>
```
FILE: styles.css
```css
* { box-sizing: border-box; }
body {
  margin: 0;
  min-height: 100vh;
  display: flex;
  flex-direction: column;
  position: relative;
  overflow-x: hidden;
  background: #666;
  color: #111;
  font: 12px/16px "Noto Sans", "Noto Sans CJK SC", sans-serif;
}
button, input, select { font: inherit; color: inherit; margin: 0; padding: 0; border: 0; background: none; border-radius: 0; }
button { cursor: default; display: block; }
select { appearance: none; outline: 0; min-width: 0; flex: 1; height: 20px; opacity: 1; }
svg { display: block; fill: none; stroke: #3d4250; stroke-width: 1; flex: none; }
.defs { position: absolute; width: 0; height: 0; }
.glyph { font: bold 12px "Liberation Sans", sans-serif; text-anchor: middle; fill: #333743; stroke: none; }
.glyph.big { font-size: 18px; fill: #333; }
.glyph.small { font-size: 9px; }
.glyph.tiny { font-size: 7px; fill: #000; }
.glyph.help { fill: #2449a8; font-size: 13px; }

.b { width: 23px; height: 22px; padding: 2px 3px 3px; flex: none; }
.b svg, .s svg, .combo svg { width: 17px; height: 17px; }
.drop { width: 13px; height: 22px; flex: none; }
.drop::after, .tri, .more::after {
  content: ""; display: block; margin: 0 auto; width: 0;
  border: 4px solid transparent; border-top-color: #111; border-bottom: 0;
}
.drop::after { border-width: 3px 3px 0; }
.drop.dim::after { border-top-color: #444; }
.drop.pale::after, .drop.grey::after { border-top-color: #888; }

.top { display: grid; grid-template: 24px 21px / 41px 1fr; background: #888; }
.appbtn { grid-row: 1 / 3; height: 41px; border: 1px solid #333; border-top-color: #777; background: linear-gradient(#c4c4c4, #777 60%, #999); }
.appbtn svg { width: 39px; height: 39px; stroke: none; }
.titlebar { display: flex; min-width: 0; background: linear-gradient(#a0a0a0, #8c8c8c); border-bottom: 1px solid #444; }
.qat { display: flex; padding-left: 5px; width: 232px; flex: none; }
.qat .b { width: 24px; height: 23px; }
.qat .drop { width: 12px; height: 23px; }
.combo {
  display: flex; align-items: center; height: 22px; padding: 0 14px 0 7px; position: relative; flex: none;
  border: 1px solid #777; border-radius: 3px; background: linear-gradient(#f6f6f6, #dcdcdc);
}
.combo::after {
  content: ""; position: absolute; right: 3px; top: 8px;
  border: 4px solid transparent; border-top: 5px solid #000; border-bottom: 0;
}
.combo svg.n { width: 16px; }
.combo.wsp { width: 180px; height: 23px; gap: 2px; padding-left: 2px; border-color: #555; border-radius: 0; background: linear-gradient(90deg, #ddd, #c2c2c2); }
.combo.wsp::after { border-top-color: #444; }
.cell { width: 16px; flex: none; background: linear-gradient(#999, #777); border: 1px solid #444; border-width: 0 1px; }
.more::after { border-top-color: #000; border-width: 5px 4px 0; }
.more::before { content: ""; display: block; width: 8px; margin: 0 auto 2px; border-top: 1px solid #000; }
.side::after { content: ""; display: block; width: 0; margin: 0 auto; border: 4px solid transparent; border-left: 5px solid #000; border-right: 0; }
.caption {
  flex: 1; display: flex; justify-content: center; gap: 17px; line-height: 23px; min-width: 0; white-space: pre; color: #0b1626;
  background:
    radial-gradient(ellipse 24px 14px at 5% 75%, #eef6e9, #eef6e900),
    radial-gradient(ellipse 30px 14px at 32% 95%, #e7f2e6, #e7f2e600),
    radial-gradient(ellipse 38px 12px at 66% 100%, #d9e8ee, #d9e8ee00),
    radial-gradient(ellipse 16px 14px at 97% 70%, #eef6ff, #eef6ff00),
    linear-gradient(#1f64b4, #4585c8);
}
.search { width: 179px; flex: none; background: #f2f2f2; padding: 3px 0 0 3px; font-size: 11px; font-style: italic; border-bottom: 1px solid #bbb; }
.search::placeholder { color: #777; opacity: 1; }
.info { display: flex; width: 250px; flex: none; border-left: 1px solid #555; }
.info .b { width: 24px; }
.info .b.q { margin-left: 8px; }
.info .drop { width: 10px; }
.info .push { margin-left: auto; }
.login { color: #fff; }
.winbtns {
  width: 123px; flex: none; display: flex; padding-left: 16px;
  background: radial-gradient(circle at 6px 16px, #fff, #fff0 16px), radial-gradient(ellipse 44px 14px at 74px 22px, #cbe2f2, #cbe2f200), linear-gradient(#2f629e, #447bb3);
}
.winbtns button { width: 28px; height: 19px; border: 1px solid #c6dcf0; border-top: 0; border-right: 0; }
.winbtns .close { width: 50px; border-right: 1px solid #c6dcf0; }
.winbtns svg { width: 26px; height: 18px; margin: 0 auto; }
.menubar { display: flex; align-items: center; gap: 25px; padding: 0 5px 0 13px; background: linear-gradient(#949494, #555); }
.menubar a { color: #fff; text-decoration: none; }
.docbtns { margin-left: auto; display: flex; gap: 5px; }
.docbtns svg { width: 12px; height: 12px; stroke: #222; }

.dock { padding-bottom: 4px; display: grid; gap: 3px; }
.bars { display: flex; gap: 1px; }
.bar { display: flex; height: 24px; width: max-content; border: 1px solid #333; border-left: 0; background: #ededed; }
.grip {
  width: 8px; flex: none; border: 2px solid #5a5a5a;
  background: repeating-conic-gradient(#333 0 25%, #5a5a5a 0 100%) 0 0 / 2px 2px #5a5a5a;
}
.sep { width: 4px; flex: none; border-left: 1px solid #888; margin: 2px 0 2px 2px; }
.sep.two { width: 3px; border-right: 1px solid #888; margin-right: 2px; }
.c120 { width: 120px; }
.c120.in { padding-left: 18px; }
.c174 { width: 174px; }
.c300 { width: 300px; padding-left: 3px; }
.c150 { width: 150px; padding-left: 3px; }
.c160 { width: 160px; padding-left: 4px; }
.c125 { width: 125px; padding-left: 4px; }
.serif { font-family: "Liberation Serif", serif; }
.serif .combo { gap: 3px; }
.serif .c150 { gap: 0; }
.ltype { width: 34px; border-top: 1px solid #000; flex: none; }
.ltype.long { width: 62px; }
.combo.off { padding-left: 8px; background: #f0f0f0; border-color: #bbb; color: #777; }
.combo.off::after { border-top-color: #aaa; }

.work { flex: 1; display: flex; gap: 4px; padding-right: 3px; min-height: 560px; }
.side-tools { width: 25px; flex: none; display: flex; flex-direction: column; gap: 1px; }
.vbar { border: 1px solid #333; background: #ededed; }
.vbar .grip { display: block; width: 23px; height: 8px; }
.vbar .b { width: 23px; }
.hsep { display: block; margin: 1px 2px 3px; border-top: 1px solid #888; }
.view { flex: 1; min-width: 0; display: grid; grid-template: 1fr 17px / 1fr 18px; border: 2px solid #999; border-right: 1px solid #fff; border-bottom: 0; }
.canvas { position: relative; background: #222830; overflow: hidden; }
.drawing { position: absolute; inset: 0; width: 100%; height: 100%; stroke: none; }
.vplabel { position: absolute; left: 4px; top: 5px; color: #eee; }
.cube { position: absolute; right: 12px; top: 11px; width: 140px; height: 180px; }
.cube text { font: 18px "Noto Sans CJK SC", sans-serif; fill: #b4b4b4; stroke: none; text-anchor: middle; }
.cube .top-face { font-size: 28px; font-weight: 300; fill: #555b66; }
.wcs { position: absolute; right: 59px; top: 169px; width: 47px; height: 17px; padding-left: 4px; text-align: left; border: 1px solid #aaacb8; border-radius: 4px; background: #8b8d9b; color: #4c4f5a; font: 11px/15px "Liberation Sans", sans-serif; }
.wcs::after { content: ""; position: absolute; right: 4px; top: 5px; width: 6px; height: 3px; border: 1px solid #b2b4c0; border-radius: 2px; }
.ucs { position: absolute; left: 8px; bottom: 7px; width: 90px; height: 80px; stroke: #f0f0f0; }
.vscroll { background: #efefef; display: flex; flex-direction: column; align-items: center; justify-content: space-between; }
.vscroll button { width: 17px; height: 17px; padding: 6px 5px; }
.thumb { width: 15px; height: 15px; margin-bottom: 30px; border: 1px solid #999; border-radius: 2px; background: linear-gradient(90deg, #f8f8f8, #ccc); }
.up::after, .down::after, .left::after, .right::after { content: ""; display: block; width: 0; border: 3px solid transparent; }
.up::after { border-bottom: 4px solid #333; border-top: 0; }
.down::after { border-top: 4px solid #333; border-bottom: 0; }
.tabs { grid-column: 1 / 3; display: flex; background: #f0f0f0; border-bottom: 2px solid #fff; min-width: 0; }
.nav { display: flex; }
.nav button { width: 14px; border: 1px solid #bbb; border-left: 0; height: 15px; }
.nav svg { width: 13px; height: 13px; fill: #666; stroke: #666; }
.tab { position: relative; height: 15px; padding: 0 8px; line-height: 15px; color: #000; }
.tab::after { content: ""; position: absolute; right: -1px; top: 0; height: 15px; border-right: 1px solid #333; transform: skewX(-25deg); }
.tab.on { padding: 0 10px; background: #222830; color: #fff; clip-path: polygon(0 0, 100% 0, 38px 100%, 6px 100%); }
.hscroll { margin-left: auto; width: 426px; display: flex; justify-content: space-between; border-left: 1px solid #999; padding: 0 23px 0 10px; }
.hscroll button { padding: 4px 0; }
.left::after { border-right: 4px solid #333; border-left: 0; }
.right::after { border-left: 4px solid #333; border-right: 0; }

.dimrow { padding: 4px 0 8px 29px; }
.cmd { display: flex; height: 57px; flex: none; }
.cmdside { width: 23px; background: linear-gradient(90deg, #888, #555); }
.cmdside .grip { display: block; width: 19px; height: 6px; margin: 3px 2px; border: 0; background: repeating-conic-gradient(#aaa 0 25%, #6660 0 100%) 0 0 / 3px 3px; }
.cmdside button { height: 22px; padding: 1px 3px; }
.cmdside svg { width: 17px; height: 17px; stroke: #fff; }
.cmdmain { flex: 1; min-width: 0; }
.log { height: 34px; padding: 1px 3px; background: #c8c8c8; border-bottom: 1px solid #888; font: 13px/15px "Noto Sans CJK SC", sans-serif; }
.log p { margin: 0; height: 15px; white-space: pre; }
.log span { font: 12px/12px "DejaVu Sans Mono", monospace; }
.prompt { display: flex; align-items: center; height: 23px; background: #fff; padding-left: 5px; }
.term { width: 15px; height: 13px; background: #d5dae7; border: 1px solid #9ba1b1; }
.term svg { width: 13px; height: 11px; }
.prompt .drop { height: 4px; }
.prompt input { flex: 1; height: 20px; padding-left: 4px; font-style: italic; }
.prompt input::placeholder { color: #888; opacity: 1; }

.status { display: flex; height: 22px; flex: none; border-top: 2px solid #111; background: linear-gradient(#777, #a5a5a5); }
.coords { width: 212px; flex: none; display: flex; gap: 22px; padding-left: 11px; line-height: 21px; color: #aaa; font-size: 11px; white-space: pre; }
.sgroup { display: flex; border-left: 1px solid #444; }
.sgroup.end { margin-left: auto; }
.s { width: 22px; height: 20px; padding: 1px 2px 2px; flex: none; border-right: 1px solid #444; background: linear-gradient(#999, #b5b5b5); }
.s.on { background: linear-gradient(#c3e3ee, #93cbdc); }
.s.txt { width: 30px; color: #000; }
.s.scale { width: 54px; display: flex; align-items: center; color: #000; white-space: nowrap; }
.s.lamp { width: 31px; padding-left: 6px; }
.s.faded svg { opacity: .5; }
.gap { width: 5px; background: #666; border-right: 1px solid #444; }
.gap.wide { width: 18px; }
.status .drop { height: 20px; }

.brand {
  position: absolute; right: 71px; bottom: 25px; width: 235px; height: 115px;
  display: flex; align-items: center; gap: 16px; padding-left: 13px; background: #222f57; color: #cfd2da;
}
.brand svg { width: 48px; height: 52px; stroke: #cfd2da; stroke-width: 4; stroke-linecap: round; }
.brand .play { fill: #cfd2da; stroke: none; }
.brand .thin { stroke-width: 2; stroke-linecap: butt; }
.brand strong { display: block; font: bold 36px/34px "Noto Sans CJK SC", sans-serif; white-space: nowrap; }
.brand span { display: block; font: 17px/22px "DejaVu Sans", sans-serif; white-space: nowrap; }
```
